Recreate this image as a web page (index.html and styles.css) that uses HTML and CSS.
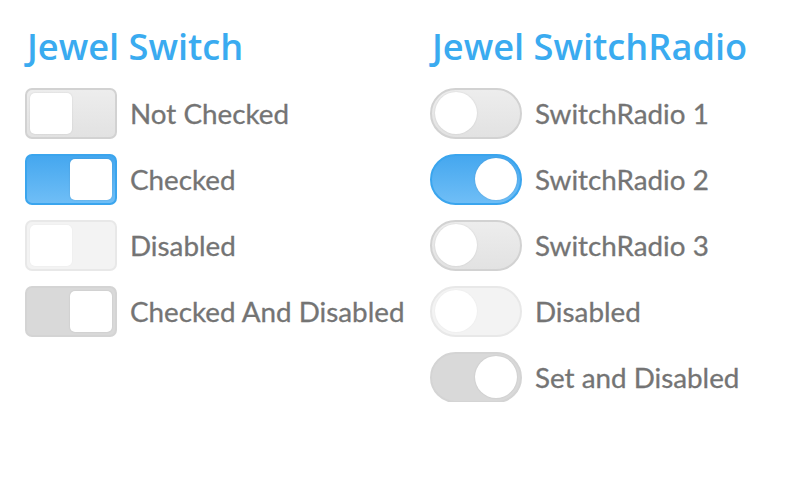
FILE: index.html
```html
<!DOCTYPE html>
<html>
<head>
<meta charset="utf-8">
<link rel="stylesheet" href="styles.css">
</head>
<body>
<div class="page">
  <section class="col col-left">
    <h1 class="title">Jewel Switch</h1>
    <div class="list">
      <div class="row"><span class="sw"><span class="knob"></span></span><span class="label">Not Checked</span></div>
      <div class="row"><span class="sw on"><span class="knob"></span></span><span class="label">Checked</span></div>
      <div class="row"><span class="sw dis"><span class="knob"></span></span><span class="label">Disabled</span></div>
      <div class="row"><span class="sw on dis-on"><span class="knob"></span></span><span class="label">Checked And Disabled</span></div>
    </div>
  </section>
  <section class="col col-right">
    <h1 class="title">Jewel SwitchRadio</h1>
    <div class="list">
      <div class="row"><span class="sw round"><span class="knob"></span></span><span class="label">SwitchRadio 1</span></div>
      <div class="row"><span class="sw round on"><span class="knob"></span></span><span class="label">SwitchRadio 2</span></div>
      <div class="row"><span class="sw round"><span class="knob"></span></span><span class="label">SwitchRadio 3</span></div>
      <div class="row"><span class="sw round dis"><span class="knob"></span></span><span class="label">Disabled</span></div>
      <div class="row"><span class="sw round on dis-on"><span class="knob"></span></span><span class="label">Set and Disabled</span></div>
    </div>
  </section>
</div>
</body>
</html>
```
FILE: styles.css
```css
html, body {
  margin: 0;
  padding: 0;
  background: #ffffff;
}
.page {
  display: flex;
  padding: 0 0 0 25px;
}
.col-left {
  width: 405px;
}
.title {
  margin: 24px 0 0 2px;
  font-family: "Open Sans", sans-serif;
  font-weight: 600;
  font-size: 36.2px;
  line-height: 44px;
  color: #3aabf0;
  letter-spacing: 0;
}
.list {
  display: flex;
  flex-direction: column;
  gap: 16px;
  margin-top: 20px;
}
.row {
  display: flex;
  align-items: center;
  height: 50px;
}
.sw {
  box-sizing: border-box;
  width: 92px;
  height: 51px;
  border: 2px solid #d2d2d2;
  border-radius: 7px;
  background: linear-gradient(#ededed, #e2e2e2);
  display: flex;
  align-items: center;
  padding: 0 3px;
  flex-shrink: 0;
}
.knob {
  width: 42px;
  height: 41px;
  border-radius: 5px;
  background: #ffffff;
  box-shadow: 0 0 2px rgba(0,0,0,0.12);
}
.sw.on {
  justify-content: flex-end;
  border-color: #3aa5ee;
  background: linear-gradient(#45a7ef, #6fbef6);
}
.sw.dis {
  border-color: #e8e8e8;
  background: #f3f3f3;
}
.sw.dis .knob {
  box-shadow: 0 0 2px rgba(0,0,0,0.05);
}
.sw.dis-on {
  border-color: #d4d4d4;
  background: #d9d9d9;
}
.sw.round {
  border-radius: 26px;
}
.sw.round .knob {
  width: 42px;
  height: 42px;
  border-radius: 50%;
}
.label {
  margin-left: 13px;
  font-family: Lato, sans-serif;
  font-size: 27.8px;
  color: #747474;
  white-space: nowrap;
  -webkit-text-stroke: 0.3px #747474;
}
```
